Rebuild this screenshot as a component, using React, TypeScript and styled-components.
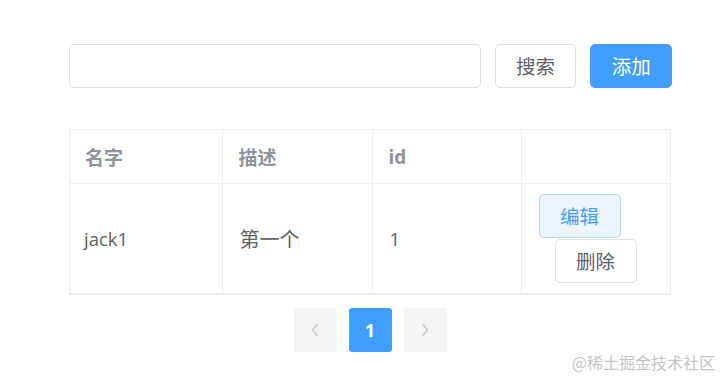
import React from 'react';
import styled, { createGlobalStyle } from 'styled-components';

const GlobalStyle = createGlobalStyle`
  body {
    margin: 0;
    background: #ffffff;
    font-family: "Open Sans", "Noto Sans CJK SC", sans-serif;
  }
`;

const Page = styled.div`
  position: relative;
  width: 727px;
  height: 382px;
  padding: 44px 0 0 69px;
  box-sizing: border-box;
`;

const Toolbar = styled.div`
  display: flex;
  align-items: center;
  gap: 14px;
  width: 603px;
`;

const SearchInput = styled.input`
  width: 413px;
  height: 44px;
  box-sizing: border-box;
  border: 1px solid #dcdfe6;
  border-radius: 5px;
  padding: 0 16px;
  font-size: 18px;
  color: #606266;
  font-family: inherit;
  outline: none;
`;

const Button = styled.button<{ $variant?: 'primary' | 'plain' | 'light' }>`
  height: 44px;
  width: 82px;
  box-sizing: border-box;
  padding: 0;
  border-radius: 5px;
  font-family: "Noto Sans CJK SC", sans-serif;
  font-size: 19.5px;
  line-height: 1;
  cursor: pointer;
  border: 1px solid
    ${(p) => (p.$variant === 'primary' ? '#409eff' : p.$variant === 'light' ? '#b3d8ff' : '#dcdfe6')};
  background: ${(p) => (p.$variant === 'primary' ? '#409eff' : p.$variant === 'light' ? '#ecf5ff' : '#ffffff')};
  color: ${(p) => (p.$variant === 'primary' ? '#ffffff' : p.$variant === 'light' ? '#4a9ef5' : '#606266')};
`;

const TableWrap = styled.div`
  margin-top: 41px;
  width: 602px;
  border: 1px solid #ebeef5;
  box-sizing: border-box;
`;

const Table = styled.table`
  width: 100%;
  border-collapse: collapse;
  table-layout: fixed;
`;

const HeaderCell = styled.th`
  height: 53px;
  padding: 0 16px;
  text-align: left;
  font-size: 19px;
  font-weight: 700;
  color: #909399;
  border-right: 1px solid #ebeef5;
  border-bottom: 1px solid #ebeef5;
  &:first-child {
    padding-left: 15px;
  }
  &:last-child {
    border-right: none;
  }
`;

const Cell = styled.td<{ $cjk?: boolean }>`
  height: 109px;
  padding: 0 16px 0 17px;
  font-size: ${(p) => (p.$cjk ? '20px' : '18.5px')};
  color: #606266;
  border-right: 1px solid #ebeef5;
  border-bottom: 1px solid #ebeef5;
  vertical-align: middle;
  &:first-child {
    padding-left: 14px;
  }
  &:last-child {
    border-right: none;
  }
`;

const Actions = styled.div`
  display: flex;
  flex-wrap: wrap;
  row-gap: 1px;
  & > button + button {
    margin-left: 16px;
  }
`;

const Pager = styled.div`
  display: flex;
  justify-content: center;
  gap: 12px;
  width: 602px;
  margin-top: 13px;
`;

const PageItem = styled.button<{ $active?: boolean }>`
  width: 43px;
  height: 44px;
  border: none;
  border-radius: 3px;
  display: flex;
  align-items: center;
  justify-content: center;
  font-family: inherit;
  font-size: 18px;
  font-weight: 700;
  background: ${(p) => (p.$active ? '#409eff' : '#f4f4f5')};
  color: ${(p) => (p.$active ? '#ffffff' : '#c0c4cc')};
`;

const Watermark = styled.div`
  position: absolute;
  right: 12px;
  top: 350px;
  font-size: 16px;
  color: #c4c4c4;
  font-family: "Noto Sans CJK SC", sans-serif;
`;

const Chevron: React.FC<{ dir: 'left' | 'right' }> = ({ dir }) => (
  <svg width="10" height="16" viewBox="0 0 10 16" fill="none">
    <polyline
      points={dir === 'left' ? '7.5,2 2.5,8 7.5,14' : '2.5,2 7.5,8 2.5,14'}
      stroke="#c0c4cc"
      strokeWidth="1.3"
    />
  </svg>
);

const rows = [{ name: 'jack1', desc: '第一个', id: 1 }];

const App: React.FC = () => (
  <Page>
    <GlobalStyle />
    <Toolbar>
      <SearchInput />
      <Button>搜索</Button>
      <Button $variant="primary">添加</Button>
    </Toolbar>
    <TableWrap>
      <Table>
        <colgroup>
          <col style={{ width: 152 }} />
          <col style={{ width: 150 }} />
          <col style={{ width: 149 }} />
          <col />
        </colgroup>
        <thead>
          <tr>
            <HeaderCell>名字</HeaderCell>
            <HeaderCell>描述</HeaderCell>
            <HeaderCell>id</HeaderCell>
            <HeaderCell />
          </tr>
        </thead>
        <tbody>
          {rows.map((row) => (
            <tr key={row.id}>
              <Cell>{row.name}</Cell>
              <Cell $cjk>{row.desc}</Cell>
              <Cell>{row.id}</Cell>
              <Cell>
                <Actions>
                  <Button $variant="light">编辑</Button>
                  <Button>删除</Button>
                </Actions>
              </Cell>
            </tr>
          ))}
        </tbody>
      </Table>
    </TableWrap>
    <Pager>
      <PageItem>
        <Chevron dir="left" />
      </PageItem>
      <PageItem $active>1</PageItem>
      <PageItem>
        <Chevron dir="right" />
      </PageItem>
    </Pager>
    <Watermark>@稀土掘金技术社区</Watermark>
  </Page>
);

export default App;
